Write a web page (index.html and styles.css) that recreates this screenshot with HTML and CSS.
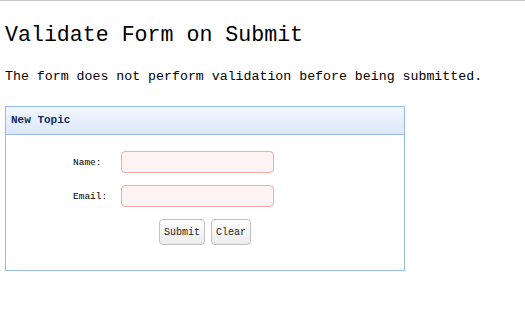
FILE: index.html
```html
<!DOCTYPE html>
<html lang="en">
<head>
    <meta charset="UTF-8">
    <title>Validate Form on Submit</title>
    <link rel="stylesheet" href="styles.css">
</head>
<body>
    <div class="page">
        <h1 class="title">Validate Form on Submit</h1>
        <p class="desc">The form does not perform validation before being submitted.</p>
        <div class="panel">
            <div class="panel-header">New Topic</div>
            <form class="panel-body">
                <div class="row">
                    <label class="label">Name:</label>
                    <input class="field" type="text">
                </div>
                <div class="row">
                    <label class="label">Email:</label>
                    <input class="field" type="text">
                </div>
                <div class="buttons">
                    <button type="button" class="btn">Submit</button>
                    <button type="button" class="btn">Clear</button>
                </div>
            </form>
        </div>
    </div>
</body>
</html>
```

FILE: styles.css
```css
*{
    margin: 0;
    padding: 0;
    box-sizing: border-box;
}
body{
    font-family: "Liberation Mono", "DejaVu Sans Mono", "Noto Sans CJK SC", monospace;
    color: #000;
    background: #fff;
    border-top: 1px solid #c8c8c8;
}
.page{
    padding: 0 5px;
}
.title{
    font-size: 21.6px;
    font-weight: normal;
    line-height: 26px;
    padding-top: 21px;
}
.desc{
    font-size: 13.25px;
    line-height: 16px;
    margin-top: 21px;
}
.panel{
    width: 400px;
    height: 165px;
    margin-top: 21px;
    border: 1px solid #99bbe8;
}
.panel-header{
    height: 28px;
    line-height: 26px;
    padding-left: 5px;
    font-size: 11px;
    font-weight: bold;
    color: #0e2d63;
    background: linear-gradient(#f1f6fe, #dce8fb);
    border-bottom: 1px solid #99bbe8;
}
.panel-body{
    padding-top: 16px;
}
.row{
    display: flex;
    align-items: center;
    height: 22px;
    margin-bottom: 12px;
}
.label{
    width: 115px;
    padding-left: 67px;
    font-size: 9.5px;
}
.field{
    width: 153px;
    height: 22px;
    border: 1px solid #f5a9a9;
    border-radius: 4px;
    background: #fff2f2;
    outline: none;
}
.buttons{
    display: flex;
    gap: 6px;
    padding-left: 153px;
}
.btn{
    height: 26px;
    padding: 0 4px;
    font-family: inherit;
    font-size: 10px;
    color: #222;
    border: 1px solid #c0c0c0;
    border-radius: 4px;
    background: linear-gradient(#ffffff, #ececec);
}
```
